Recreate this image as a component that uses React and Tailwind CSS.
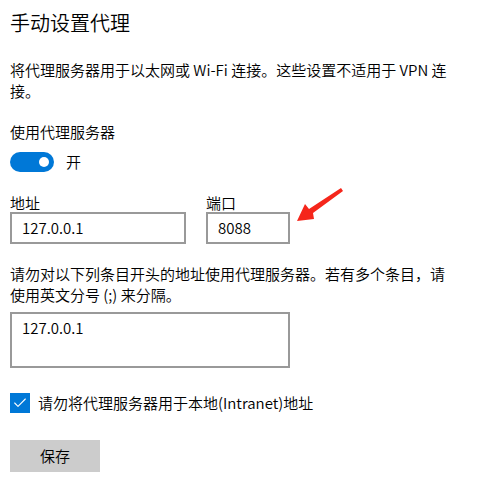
import { Check } from 'lucide-react';

const font = { fontFamily: '"Noto Sans CJK SC", "Noto Sans", sans-serif' };

const App = () => {
  return (
    <div className="w-[478px] h-[479px] bg-white text-black px-[10px] pt-[9px] relative font-[350]" style={font}>
      {/* Header */}
      <h1 className="text-[20px] leading-[28px] font-[350]">手动设置代理</h1>

      <p className="mt-[22px] text-[15px] leading-[21px] whitespace-nowrap">
        将代理服务器用于以太网或 Wi-Fi 连接。这些设置不适用于 VPN 连<br />接。
      </p>

      {/* Toggle */}
      <p className="mt-[20px] text-[15px] leading-[21px]">使用代理服务器</p>
      <div className="mt-[10px] flex items-center gap-[12px]">
        <div className="w-[44px] h-[20px] rounded-full bg-[#0078d7] flex items-center justify-end pr-[5px]">
          <div className="w-[10px] h-[10px] rounded-full bg-white" />
        </div>
        <span className="text-[15px] leading-[20px]">开</span>
      </div>

      {/* Address + port */}
      <div className="mt-[22px] flex gap-[20px]">
        <div>
          <div className="text-[15px] leading-[18px]">地址</div>
          <div className="w-[176px] h-[32px] border-2 border-[#999999] pl-[10px] flex items-center text-[15px]">127.0.0.1</div>
        </div>
        <div>
          <div className="text-[15px] leading-[18px]">端口</div>
          <div className="w-[84px] h-[32px] border-2 border-[#999999] pl-[10px] flex items-center text-[15px]">8088</div>
        </div>
      </div>

      {/* Arrow */}
      <svg className="absolute left-[290px] top-[184px]" width="60" height="44" viewBox="290 184 60 44">
        <polygon points="297,221 305,204 309,209 341,188 343,191 313,213 314,219" fill="#f5261b" />
      </svg>

      <p className="mt-[19px] text-[15px] leading-[21px] whitespace-nowrap">
        请勿对以下列条目开头的地址使用代理服务器。若有多个条目，请<br />使用英文分号 (;) 来分隔。
      </p>

      <div className="mt-[7px] w-[280px] h-[56px] border-2 border-[#999999] pl-[10px] pt-[3px] text-[15px] leading-[21px]">
        127.0.0.1
      </div>

      {/* Checkbox */}
      <div className="mt-[25px] flex items-center gap-[8px]">
        <div className="w-[20px] h-[20px] bg-[#0078d7] flex items-center justify-center">
          <Check size={16} strokeWidth={1.6} className="text-white" />
        </div>
        <span className="text-[15px] leading-[20px]">请勿将代理服务器用于本地(Intranet)地址</span>
      </div>

      <button className="mt-[27px] w-[90px] h-[32px] bg-[#cccccc] text-[15px] flex items-center justify-center">
        保存
      </button>
    </div>
  );
};

export default App;
